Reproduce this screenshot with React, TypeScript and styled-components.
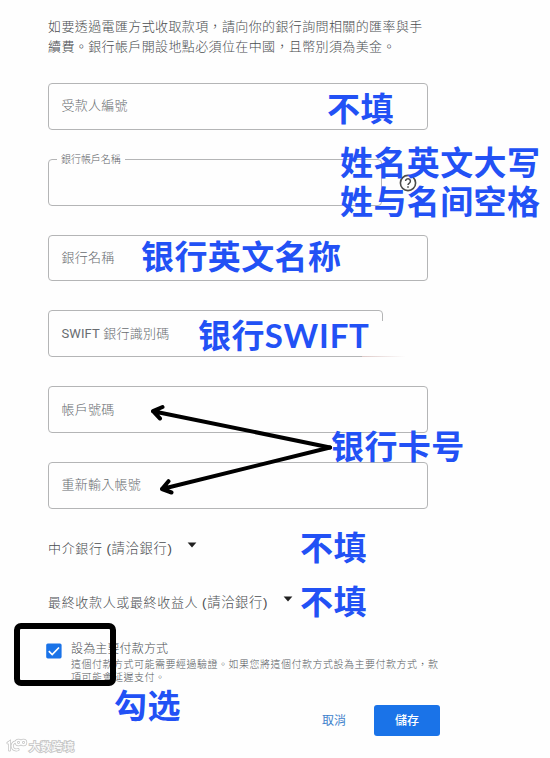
import React from "react";
import styled, { createGlobalStyle, css } from "styled-components";

const GlobalStyle = createGlobalStyle`
  *, *::before, *::after { box-sizing: border-box; }
  body {
    margin: 0;
    background: #fefefe;
    font-family: Roboto, "Noto Sans CJK TC", sans-serif;
  }
`;

const Page = styled.main`
  position: relative;
  width: 550px;
  height: 758px;
  overflow: hidden;
  padding: 17px 110px 0 48px;
  background: #fefefe;
`;

const Intro = styled.p`
  margin: 0;
  width: 385px;
  height: 66px;
  font-size: 13px;
  font-weight: 300;
  line-height: 20px;
  letter-spacing: 0.38px;
  white-space: nowrap;
  color: #4a4d50;
`;

const Fields = styled.div`
  display: flex;
  flex-direction: column;
  gap: 29px;
  width: 381px;
`;

type FieldKind = "full" | "short" | "faded";

const Field = styled.div<{ $kind?: FieldKind }>`
  position: relative;
  display: flex;
  align-items: center;
  width: ${({ $kind = "full" }) => ($kind === "full" ? "380px" : $kind === "short" ? "334px" : "335px")};
  height: 46.8px;
  padding-left: 12.5px;
  border: 1px solid #b4b5b6;
  border-radius: 4px;
  ${({ $kind }) =>
    $kind === "faded" &&
    css`
      border-bottom-right-radius: 0;
      &::before {
        content: "";
        position: absolute;
        right: -1px;
        top: 10px;
        bottom: 0;
        width: 1px;
        background: #fefefe;
      }
      &::after {
        content: "";
        position: absolute;
        right: -24px;
        bottom: -1px;
        width: 44px;
        height: 1px;
        background: linear-gradient(90deg, #ddc9c7, #fefefe);
      }
    `}
`;

const FieldLabel = styled.span`
  font-size: 13px;
  font-weight: 300;
  line-height: 20px;
  letter-spacing: 0.25px;
  white-space: nowrap;
  color: #686c70;
`;

const Latin = styled.span`
  font-weight: 400;
  letter-spacing: 0.1px;
`;

const FloatingLabel = styled.span`
  position: absolute;
  top: -8px;
  left: 8px;
  padding: 0 4px;
  background: #fefefe;
  font-size: 10px;
  font-weight: 300;
  line-height: 15px;
  letter-spacing: -0.05px;
  white-space: nowrap;
  color: #5f6368;
`;

const HelpIcon = styled.svg`
  position: absolute;
  left: 350px;
  top: 14px;
  width: 18px;
  height: 18px;
`;

const Expander = styled.div`
  display: flex;
  align-items: center;
  gap: 15px;
  height: 20px;
  font-size: 13px;
  letter-spacing: 0.66px;
  white-space: nowrap;
  color: #4a4d50;
`;

const Hint = styled.span`
  font-family: "Liberation Sans", "Noto Sans CJK TC", sans-serif;
  font-size: 13.3px;
`;

const ExpanderLabel = styled.span`
  font-weight: 300;
`;

const Expanders = styled.div`
  display: flex;
  flex-direction: column;
  gap: 34px;
  margin-top: 29px;
`;

const Caret = styled.svg`
  width: 10px;
  height: 6px;
  margin-top: -5px;
`;

const PrimaryOption = styled.div`
  display: flex;
  gap: 9px;
  margin-top: 28px;
  height: 48px;
`;

const Checkbox = styled.svg`
  flex: none;
  width: 16px;
  height: 16px;
  margin: 3px 0 0 -2px;
`;

const OptionText = styled.div`
  width: 380px;
  white-space: nowrap;
`;

const OptionTitle = styled.div`
  font-size: 12px;
  font-weight: 300;
  line-height: 18px;
  letter-spacing: 0.15px;
  color: #4a4d50;
`;

const OptionNote = styled.div`
  font-size: 10px;
  font-weight: 300;
  line-height: 13.5px;
  letter-spacing: 0.5px;
  color: #55595d;
`;

const Actions = styled.div`
  display: flex;
  justify-content: flex-end;
  gap: 11px;
  width: 392px;
  margin-top: 17px;
`;

const Button = styled.button<{ $primary?: boolean }>`
  width: ${({ $primary }) => ($primary ? 66 : 58)}px;
  height: 31px;
  padding: 2px 0 0;
  border: 0;
  border-radius: 3px;
  background: ${({ $primary }) => ($primary ? "#1a73e8" : "transparent")};
  color: ${({ $primary }) => ($primary ? "#fff" : "#3f82cc")};
  font: ${({ $primary }) => ($primary ? 500 : 400)} 12px/29px Roboto, "Noto Sans CJK TC", sans-serif;
`;

const Note = styled.div<{ $x: number; $y: number }>`
  position: absolute;
  left: ${({ $x }) => $x}px;
  top: ${({ $y }) => $y}px;
  font-family: "Noto Sans CJK SC", sans-serif;
  font-size: 33px;
  font-weight: 700;
  line-height: 39px;
  letter-spacing: 0.4px;
  white-space: pre;
  color: #2251f5;
`;

const NoteLatin = styled.span`
  font-family: Lato, sans-serif;
  font-size: 33px;
  letter-spacing: 0.8px;
`;

const Arrows = styled.svg`
  position: absolute;
  left: 145px;
  top: 398px;
  width: 192px;
  height: 102px;
`;

const Highlight = styled.div`
  position: absolute;
  left: 14px;
  top: 623px;
  width: 102px;
  height: 63px;
  border: 6px solid #000;
  border-radius: 7px;
`;

const Watermark = styled.div`
  position: absolute;
  left: 6px;
  top: 737px;
  display: flex;
  align-items: center;
  gap: 1px;
  height: 18px;
  font-family: "Noto Sans CJK SC", sans-serif;
  font-size: 11.3px;
  font-weight: 400;
  color: #fff;
  white-space: nowrap;
  -webkit-text-stroke: 2px #c8c8c8;
  paint-order: stroke fill;
`;

const DownCaret = () => (
  <Caret viewBox="0 0 10 6">
    <path d="M0.6 0.6h8.8L5 5.4z" fill="#202020" />
  </Caret>
);

export default function App() {
  return (
    <>
      <GlobalStyle />
      <Page>
        <Intro>
          如要透過電匯方式收取款項，請向你的銀行詢問相關的匯率與手
          <br />
          續費。銀行帳戶開設地點必須位在中國，且幣別須為美金。
        </Intro>
        <Fields>
          <Field><FieldLabel>受款人編號</FieldLabel></Field>
          <Field $kind="short">
            <FloatingLabel>銀行帳戶名稱</FloatingLabel>
            <HelpIcon viewBox="0 0 18 18" fill="none" stroke="#4b4b4b">
              <circle cx="9" cy="9" r="7.6" strokeWidth="1.6" />
              <path d="M6.6 7.1a2.4 2.4 0 1 1 3.9 1.9C9.5 9.700 9 10 9 11.100" strokeWidth="1.5" />
              <path d="M9 12.300v1.500" strokeWidth="1.6" />
            </HelpIcon>
          </Field>
          <Field><FieldLabel>銀行名稱</FieldLabel></Field>
          <Field $kind="faded"><FieldLabel><Latin>SWIFT</Latin> 銀行識別碼</FieldLabel></Field>
          <Field><FieldLabel>帳戶號碼</FieldLabel></Field>
          <Field><FieldLabel>重新輸入帳號</FieldLabel></Field>
        </Fields>
        <Expanders>
          <Expander><ExpanderLabel>中介銀行 <Hint>(請洽銀行)</Hint></ExpanderLabel><DownCaret /></Expander>
          <Expander><ExpanderLabel>最終收款人或最終收益人 <Hint>(請洽銀行)</Hint></ExpanderLabel><DownCaret /></Expander>
        </Expanders>
        <PrimaryOption>
          <Checkbox viewBox="0 0 16 16">
            <rect x="0.200" y="0.400" width="15.400" height="15" rx="1.600" fill="#1a73e8" />
            <path d="M2.800 8.200l3.400 3.300 6.800-7" fill="none" stroke="#fff" strokeWidth="1.700" />
          </Checkbox>
          <OptionText>
            <OptionTitle>設為主要付款方式</OptionTitle>
            <OptionNote>
              這個付款方式可能需要經過驗證。如果您將這個付款方式設為主要付款方式，款
              <br />
              項可能會延遲支付。
            </OptionNote>
          </OptionText>
        </PrimaryOption>
        <Actions>
          <Button>取消</Button>
          <Button $primary>儲存</Button>
        </Actions>

        <Note $x={327} $y={88}>不填</Note>
        <Note $x={340} $y={142}>{"姓名英文大写\n姓与名间空格"}</Note>
        <Note $x={141} $y={236}>银行英文名称</Note>
        <Note $x={198} $y={315}>银行<NoteLatin>SWIFT</NoteLatin></Note>
        <Note $x={331} $y={426}>银行卡号</Note>
        <Note $x={300} $y={527}>不填</Note>
        <Note $x={300} $y={581}>不填</Note>
        <Note $x={114} $y={685}>勾选</Note>

        <Arrows viewBox="145 398 192 102" fill="none" stroke="#000" strokeWidth="4" strokeLinecap="round" strokeLinejoin="round">
          <path d="M330 447.500L153 411.200M162.500 407L153 411.200L160 418.500" />
          <path d="M330 447.500L162 489M168.500 481.200L162 489L171.500 492.500" />
        </Arrows>
        <Highlight />
        <Watermark>
          <svg width="22" height="16" viewBox="0 0 22 16" fill="none" strokeLinecap="round">
            <g stroke="#c4c4c4" strokeWidth="3">
              <path d="M2 5l1.500-1V12M12 11.500A4 4 0 1 1 9.500 4" />
              <circle cx="12.500" cy="4.500" r="2.200" /><circle cx="17.500" cy="4.500" r="2.200" />
            </g>
            <g stroke="#fff" strokeWidth="1.500">
              <path d="M2 5l1.500-1V12M12 11.500A4 4 0 1 1 9.500 4" />
              <circle cx="12.500" cy="4.500" r="2.200" /><circle cx="17.500" cy="4.500" r="2.200" />
            </g>
          </svg>
          大数跨境
        </Watermark>
      </Page>
    </>
  );
}
